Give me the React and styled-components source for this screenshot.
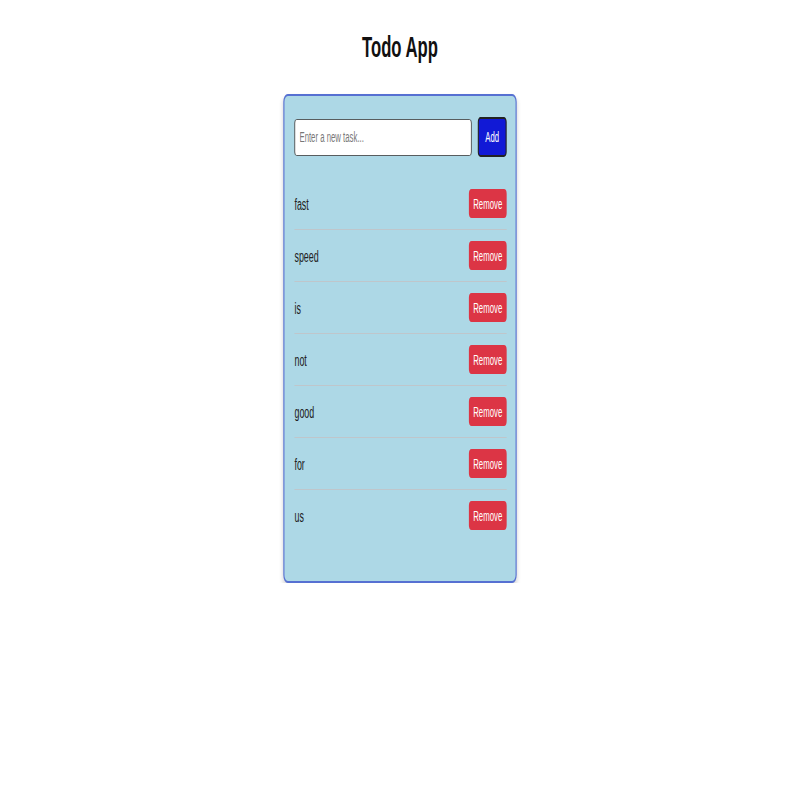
import React, { useState } from "react";
import styled, { createGlobalStyle } from "styled-components";

const GlobalStyle = createGlobalStyle`
  html, body {
    margin: 0;
    padding: 0;
    background: #ffffff;
    overflow-x: hidden;
  }
  body {
    font-family: "Liberation Sans", Arial, sans-serif;
  }
`;

const SCALE_X = 800 / 1440;

const Stage = styled.div`
  width: 1440px;
  transform: scaleX(${SCALE_X});
  transform-origin: 0 0;
  display: flex;
  flex-direction: column;
  align-items: center;
`;

const Title = styled.h1`
  margin: 29px 0 29px;
  font-size: 30px;
  line-height: 36px;
  font-weight: 700;
  color: #111;
`;

const Card = styled.div`
  box-sizing: border-box;
  width: 420px;
  padding: 21px 16px 20px 18px;
  background: #add8e6;
  border: 2px solid #5670d2;
  border-radius: 8px;
  box-shadow: 0 3px 6px rgba(0, 0, 0, 0.18);
`;

const Form = styled.form`
  display: flex;
  align-items: center;
  gap: 11px;
  margin: 0 0 21px;
`;

const TaskInput = styled.input`
  flex: 1;
  min-width: 0;
  box-sizing: border-box;
  height: 37px;
  padding: 0 8px;
  border: 1px solid #333;
  border-radius: 4px;
  background: #fff;
  font-family: "Liberation Sans", Arial, sans-serif;
  font-size: 14px;
  color: #222;
  &::placeholder {
    color: #777;
  }
`;

const AddButton = styled.button`
  box-sizing: border-box;
  width: 52px;
  height: 40px;
  padding: 0;
  background: #1119d6;
  color: #fff;
  border: 2px solid #222;
  border-radius: 5px;
  font-family: "Liberation Sans", Arial, sans-serif;
  font-size: 14px;
  cursor: pointer;
`;

const List = styled.ul`
  list-style: none;
  margin: 0 0 20px;
  padding: 0;
`;

const Row = styled.li`
  display: flex;
  justify-content: space-between;
  align-items: center;
  padding: 11px 0;
  border-bottom: 1px solid #bfc6cb;
  &:last-child {
    border-bottom: none;
  }
`;

const TaskText = styled.span`
  font-size: 16px;
  line-height: 18px;
  padding-top: 2px;
  color: #222;
`;

const RemoveButton = styled.button`
  box-sizing: border-box;
  height: 29px;
  padding: 0 8px;
  background: #dc3545;
  color: #fff;
  border: none;
  border-radius: 5px;
  font-family: "Liberation Sans", Arial, sans-serif;
  font-size: 14px;
  cursor: pointer;
`;

export default function App() {
  const [tasks, setTasks] = useState(["fast", "speed", "is", "not", "good", "for", "us"]);
  const [value, setValue] = useState("");

  const add = (e) => {
    e.preventDefault();
    if (!value.trim()) return;
    setTasks([...tasks, value.trim()]);
    setValue("");
  };

  return (
    <>
      <GlobalStyle />
      <Stage>
        <Title>Todo App</Title>
        <Card>
          <Form onSubmit={add}>
            <TaskInput
              placeholder="Enter a new task..."
              value={value}
              onChange={(e) => setValue(e.target.value)}
            />
            <AddButton type="submit">Add</AddButton>
          </Form>
          <List>
            {tasks.map((t, i) => (
              <Row key={i}>
                <TaskText>{t}</TaskText>
                <RemoveButton onClick={() => setTasks(tasks.filter((_, j) => j !== i))}>
                  Remove
                </RemoveButton>
              </Row>
            ))}
          </List>
        </Card>
      </Stage>
    </>
  );
}
